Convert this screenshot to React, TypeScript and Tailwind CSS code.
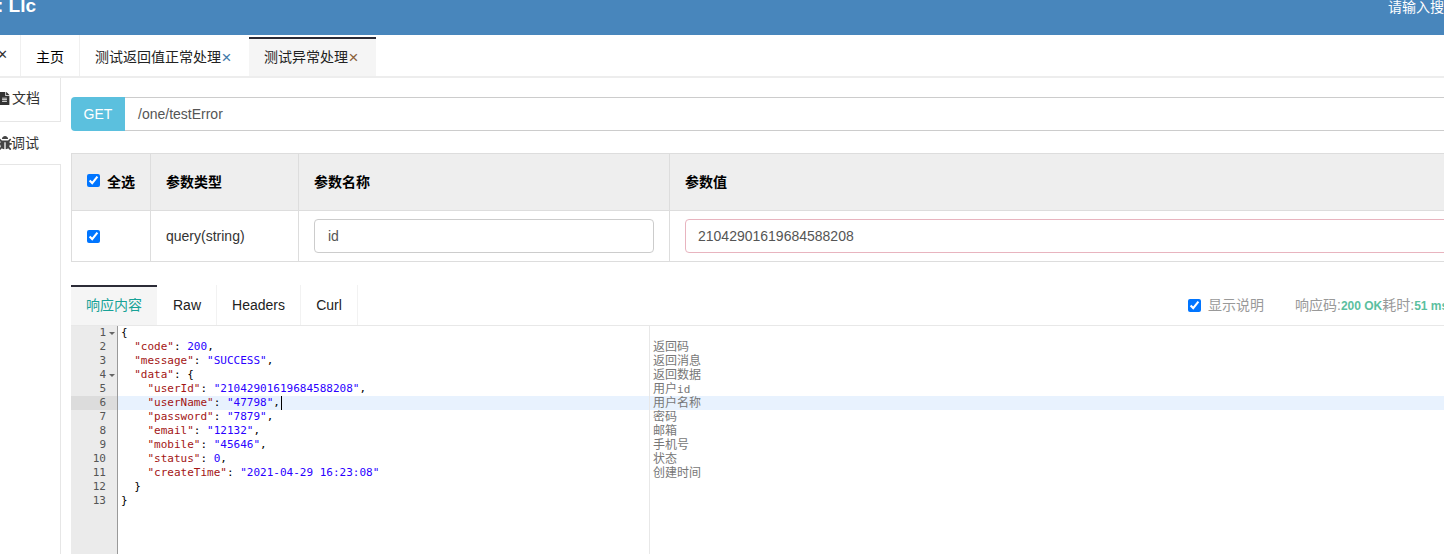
import { FaBug, FaFileAlt } from 'react-icons/fa';

const codeLines = [
  { text: '{', fold: true },
  { text: '  "code": 200,' },
  { text: '  "message": "SUCCESS",' },
  { text: '  "data": {', fold: true },
  { text: '    "userId": "21042901619684588208",' },
  { text: '    "userName": "47798",', active: true },
  { text: '    "password": "7879",' },
  { text: '    "email": "12132",' },
  { text: '    "mobile": "45646",' },
  { text: '    "status": 0,' },
  { text: '    "createTime": "2021-04-29 16:23:08"' },
  { text: '  }' },
  { text: '}' },
];

const notes = ['', '返回码', '返回消息', '返回数据', '用户id', '用户名称', '密码', '邮箱', '手机号', '状态', '创建时间'];

// tiny json colouring, enough for this sample
function CodeLine({ text }: { text: string }) {
  const m = text.match(/^(\s*)("[^"]+")(:\s)(.*)$/);
  if (!m) return <span className="text-black">{text}</span>;
  const value = m[4];
  const v = value.match(/^("[^"]*"|\d+)(.*)$/);
  return (
    <>
      {m[1]}
      <span className="text-[#a31515]">{m[2]}</span>
      <span className="text-black">{m[3]}</span>
      {v ? (
        <>
          <span className="text-[#2a00ff]">{v[1]}</span>
          <span className="text-black">{v[2]}</span>
        </>
      ) : (
        <span className="text-black">{value}</span>
      )}
    </>
  );
}

function Editor() {
  return (
    <div className="flex h-[228px] font-['DejaVu_Sans_Mono',monospace] text-[11px] leading-[14px]">
      <div className="w-[47px] shrink-0 border-r border-[#999] bg-[#ebebeb] text-[#555]">
        {codeLines.map((line, idx) => (
          <div key={idx} className={`flex h-[14px] items-center justify-end pr-[3px] ${line.active ? 'bg-[#dcdcdc]' : ''}`}>
            <span>{idx + 1}</span>
            <span className="ml-[3px] flex w-[5px] justify-center">
              {line.fold && <span className="h-0 w-0 border-x-[3px] border-t-[3px] border-x-transparent border-t-[#666]" />}
            </span>
          </div>
        ))}
      </div>
      <div className="w-[532px] shrink-0 border-r border-[#e8e8e8]">
        {codeLines.map((line, idx) => (
          <div key={idx} className={`h-[14px] whitespace-pre pl-[3px] ${line.active ? 'bg-[#e8f2fe]' : ''}`}>
            <CodeLine text={line.text} />
            {line.active && <span className="inline-block h-[14px] w-px translate-x-[1px] bg-black align-top" />}
          </div>
        ))}
      </div>
      <div className="min-w-0 flex-1 font-['DejaVu_Sans_Mono','Noto_Sans_CJK_SC',monospace] text-[12px] text-[#777]">
        {notes.map((note, idx) => (
          <div key={idx} className={`h-[14px] pl-[3px] ${idx === 5 ? 'bg-[#e8f2fe]' : ''}`}>
            {note === '用户id' ? (
              <>
                用户<span className="text-[11px]">id</span>
              </>
            ) : (
              note
            )}
          </div>
        ))}
      </div>
    </div>
  );
}

export default function App() {
  return (
    <div className="h-[554px] w-[1444px] overflow-hidden bg-white font-['Liberation_Sans','Noto_Sans_CJK_SC',sans-serif] text-[14px] text-[#333]">
      <header className="flex h-[35px] items-start justify-between overflow-hidden bg-[#4886bc] text-white">
        <div className="-ml-[3px] -mt-[10px] text-[19px] font-bold leading-[32px]">: Llc</div>
        <div className="-mr-[4px] -mt-[1px] w-[60px] whitespace-nowrap text-[14px] leading-[16px]">请输入搜索</div>
      </header>

      <nav className="flex h-[43px] border-b-2 border-[#ededed]">
        <div className="w-[21px] border-r border-[#f0f0f0] pt-[13px] text-[13px] leading-[14px] text-[#333]">
          <span className="-ml-[3px] block">✕</span>
        </div>
        <div className="flex w-[59px] items-center justify-center border-r border-[#f0f0f0] pt-[4px] text-black">主页</div>
        <div className="flex w-[169px] items-center justify-center pr-[2px] pt-[4px] text-[#222]">
          测试返回值正常处理<span className="w-[11px] text-center text-[17px] leading-[14px] text-[#3f78a8]">×</span>
        </div>
        <div className="mt-[2px] flex w-[127px] items-center justify-center border-t-2 border-[#2b2b36] bg-[#f5f5f5] pr-[2px] text-[#222]">
          测试异常处理<span className="w-[11px] text-center text-[17px] leading-[14px] text-[#8a5f3a]">×</span>
        </div>
      </nav>

      <div className="flex h-[477px]">
        <aside className="w-[61px] shrink-0 text-[#333]">
          <div className="flex h-[44px] items-center border-b border-r border-[#e6e6e6] pb-[3px]">
            <FaFileAlt className="-ml-[2px] mr-[1px] text-[13px] text-[#333]" />
            <span>文档</span>
          </div>
          <div className="flex h-[42px] items-center">
            <FaBug className="-ml-[2px] -mr-[1px] text-[14px] text-[#444]" />
            <span>调试</span>
          </div>
          <div className="h-[391px] border-r border-t border-[#e6e6e6]" />
        </aside>

        <main className="w-[1500px] shrink-0 pl-[10px]">
          <div className="mt-[19px] flex h-[34px]">
            <div className="flex w-[54px] items-center justify-center rounded-l-[4px] bg-[#5bc0de] text-white">GET</div>
            <div className="flex flex-1 items-center border-y border-[#cccccc] pl-[13px] text-[#555]">/one/testError</div>
          </div>

          <div className="mt-[22px] border border-[#dddddd]">
            <div className="flex h-[57px] border-b border-[#dddddd] bg-[#eeeeee] font-bold text-black">
              <div className="flex w-[79px] items-center gap-[7px] border-r border-[#dddddd] pl-[15px]">
                <input type="checkbox" defaultChecked className="-mt-[4px] m-0 h-[13px] w-[13px]" />
                <span>全选</span>
              </div>
              <div className="flex w-[148px] items-center border-r border-[#dddddd] pl-[15px]">参数类型</div>
              <div className="flex w-[371px] items-center border-r border-[#dddddd] pl-[15px]">参数名称</div>
              <div className="flex flex-1 items-center pl-[15px]">参数值</div>
            </div>
            <div className="flex h-[50px] text-[#333]">
              <div className="flex w-[79px] items-center border-r border-[#dddddd] pl-[15px]">
                <input type="checkbox" defaultChecked className="m-0 h-[13px] w-[13px]" />
              </div>
              <div className="flex w-[148px] items-center border-r border-[#dddddd] pl-[15px]">query(string)</div>
              <div className="flex w-[371px] items-center border-r border-[#dddddd] pl-[15px]">
                <div className="flex h-[34px] w-[340px] items-center rounded-[4px] border border-[#cccccc] pl-[13px] text-[#555]">id</div>
              </div>
              <div className="flex flex-1 items-center pl-[15px]">
                <div className="flex h-[34px] flex-1 items-center rounded-[4px] border border-[#e8b4bf] pl-[12px] text-[#555]">21042901619684588208</div>
              </div>
            </div>
          </div>

          <div className="mt-[23px] flex h-[41px] items-stretch justify-between border-b border-[#e8e8e8]">
            <div className="flex">
              <div className="flex w-[86px] items-center justify-center border-t-2 border-[#2b2b36] bg-[#f5f5f5] pb-[2px] text-[#17a297]">响应内容</div>
              <div className="flex w-[60px] items-center justify-center border-r border-[#f2f2f2] pl-[1px] text-[#222]">Raw</div>
              <div className="flex w-[84px] items-center justify-center border-r border-[#f2f2f2] text-[#222]">Headers</div>
              <div className="flex w-[57px] items-center justify-center border-r border-[#f2f2f2] text-[#222]">Curl</div>
            </div>
            <div className="flex w-[373px] items-center text-[#999]">
              <input type="checkbox" defaultChecked className="m-0 h-[13px] w-[13px]" />
              <span className="ml-[7px]">显示说明</span>
              <span className="ml-[31px] whitespace-nowrap">
                响应码:<b className="text-[12px] text-[#5bbf9f]">200 OK</b>耗时:<b className="text-[12px] text-[#5bbf9f]">51 ms</b>
              </span>
            </div>
          </div>

          <Editor />
        </main>
      </div>
    </div>
  );
}
